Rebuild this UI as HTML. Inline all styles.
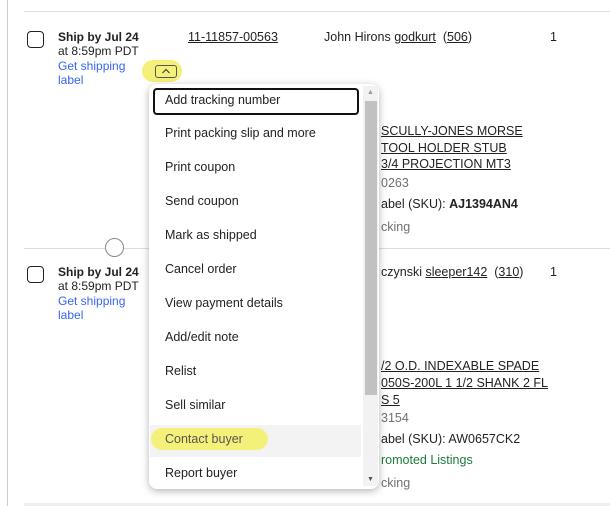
<!DOCTYPE html>
<html><head><style>
body{margin:0;width:610px;height:506px;background:#fff;font-family:"Liberation Sans",sans-serif;font-size:12.5px;color:#222;position:relative;overflow:hidden}
.a{position:absolute;white-space:nowrap}
.u{text-decoration:underline}
.b{color:#3665f3}
.g{color:#707070}
.cb{position:absolute;width:15px;height:15px;border:1.5px solid #222;border-radius:4px}
.item{position:absolute;left:165px;font-size:12.5px;color:#222}
</style></head><body>
<div class="a" style="left:7px;top:0;width:1px;height:506px;background:#ccc"></div>
<div class="a" style="left:24px;top:11px;width:586px;height:1px;background:#ddd"></div>
<div class="a" style="left:24px;top:248px;width:586px;height:1px;background:#ddd"></div>
<div class="a" style="left:24px;top:503px;width:586px;height:3px;background:#eee"></div>

<div class="cb" style="left:27px;top:31px"></div>
<div class="a" style="left:58px;top:30px;font-weight:bold;font-size:12px">Ship by Jul 24</div>
<div class="a" style="left:58px;top:44px;font-size:12px">at 8:59pm PDT</div>
<div class="a b" style="left:58px;top:59px;font-size:12px;line-height:14px">Get shipping<br>label</div>
<div class="a u" style="left:188px;top:30px">11-11857-00563</div>
<div class="a" style="left:324px;top:30px">John Hirons <span class="u">godkurt</span> &nbsp;(<span class="u">506</span>)</div>
<div class="a" style="left:550px;top:30px">1</div>
<div class="a" style="left:142px;top:60px;width:40px;height:22px;border-radius:11px;background:#f5f07a"></div>
<div class="a" style="left:155px;top:65px;width:20px;height:11px;border:1px solid #555;border-radius:3px"></div>
<svg class="a" style="left:155px;top:65px" width="22" height="13"><path d="M7.5 8 L11 4.5 L14.5 8" stroke="#444" stroke-width="1.2" fill="none"/></svg>
<div class="a u" style="left:381px;top:123px;line-height:16.5px">SCULLY-JONES MORSE<br>TOOL HOLDER STUB<br>3/4 PROJECTION MT3</div>
<div class="a g" style="left:381px;top:176px">0263</div>
<div class="a" style="left:381px;top:197px">abel (SKU): <b>AJ1394AN4</b></div>
<div class="a g" style="left:381px;top:220px">cking</div>
<div class="a" style="left:105px;top:238px;width:17px;height:17px;border:1px solid #888;border-radius:50%;background:#fff"></div>

<div class="cb" style="left:27px;top:266px"></div>
<div class="a" style="left:58px;top:265px;font-weight:bold;font-size:12px">Ship by Jul 24</div>
<div class="a" style="left:58px;top:279px;font-size:12px">at 8:59pm PDT</div>
<div class="a b" style="left:58px;top:294px;font-size:12px;line-height:14px">Get shipping<br>label</div>
<div class="a" style="left:381px;top:265px">czynski <span class="u">sleeper142</span> &nbsp;(<span class="u">310</span>)</div>
<div class="a" style="left:550px;top:265px">1</div>
<div class="a u" style="left:381px;top:358px;line-height:17px">/2 O.D. INDEXABLE SPADE<br>050S-200L 1 1/2 SHANK 2 FL<br>S 5</div>
<div class="a g" style="left:381px;top:411px">3154</div>
<div class="a" style="left:381px;top:432px">abel (SKU): AW0657CK2</div>
<div class="a" style="left:381px;top:453px;color:#1b7d3a">romoted Listings</div>
<div class="a g" style="left:381px;top:476px">cking</div>

<div class="a" style="left:149px;top:84px;width:230px;height:405px;background:#fff;border-radius:8px;box-shadow:0 2px 8px rgba(0,0,0,.3)"></div>
<div class="a" style="left:363px;top:86px;width:15px;height:400px;background:#f2f2f2"></div>
<div class="a" style="left:365px;top:101px;width:12px;height:294px;background:#c1c1c1"></div>
<div class="a" style="left:367px;top:89px;font-size:7px;color:#999">▲</div>
<div class="a" style="left:367px;top:476px;font-size:7px;color:#555">▼</div>
<div class="a" style="left:153px;top:88px;width:202px;height:23px;border:2px solid #111;border-radius:4px"></div>
<div class="a" style="left:150px;top:425px;width:211px;height:32px;background:#f3f3f3"></div>
<div class="a" style="left:151px;top:428px;width:117px;height:22px;border-radius:11px;background:#f5f07a"></div>
<div class="item" style="top:93px">Add tracking number</div>
<div class="item" style="top:126px">Print packing slip and more</div>
<div class="item" style="top:160px">Print coupon</div>
<div class="item" style="top:194px">Send coupon</div>
<div class="item" style="top:228px">Mark as shipped</div>
<div class="item" style="top:262px">Cancel order</div>
<div class="item" style="top:296px">View payment details</div>
<div class="item" style="top:330px">Add/edit note</div>
<div class="item" style="top:364px">Relist</div>
<div class="item" style="top:398px">Sell similar</div>
<div class="item" style="top:432px;color:#555">Contact buyer</div>
<div class="item" style="top:466px">Report buyer</div>
</body></html>
